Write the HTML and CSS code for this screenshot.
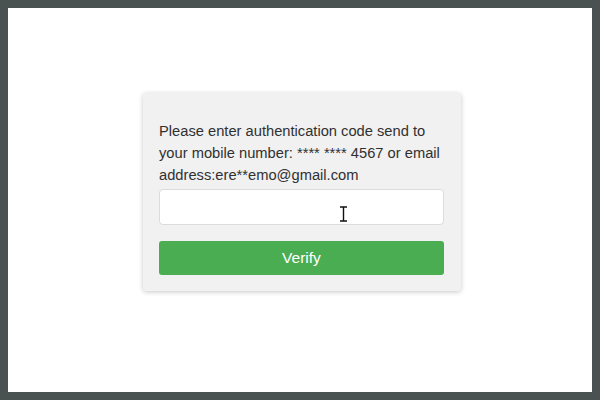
FILE: index.html
```html
<!DOCTYPE html>
<html>
<head>
<meta charset="utf-8">
<link rel="stylesheet" href="styles.css">
</head>
<body>
<div class="frame">
  <div class="card">
    <p class="msg">Please enter authentication code send to your mobile number: **** **** 4567 or email address:ere**emo@gmail.com</p>
    <div class="field">
      <input class="code" type="text">
      <svg class="ibeam" width="9" height="16" viewBox="0 0 9 16"><path d="M1 1h7M1 15h7M4.5 1v14" stroke="#111" stroke-width="1.4" fill="none"/></svg>
    </div>
    <button class="verify">Verify</button>
  </div>
</div>
</body>
</html>
```
FILE: styles.css
```css
* { box-sizing: border-box; }
html, body { margin: 0; padding: 0; }
body {
  width: 600px;
  height: 400px;
  background: #4a5151;
  font-family: "Liberation Sans", Arial, sans-serif;
}
.frame {
  position: relative;
  margin: 8px;
  width: 584px;
  height: 384px;
  background: #ffffff;
  overflow: hidden;
}
.card {
  position: absolute;
  left: 135px;
  top: 85px;
  width: 318px;
  height: 198px;
  background: #f1f1f1;
  border-radius: 3px;
  box-shadow: 0 1px 5px rgba(0,0,0,0.22);
  padding: 27px 15px 16px 16px;
  display: flex;
  flex-direction: column;
}
.msg {
  margin: 0;
  font-size: 14.7px;
  line-height: 22px;
  color: #303030;
}
.field {
  position: relative;
  margin-top: 3px;
}
.code {
  display: block;
  width: 285px;
  height: 36px;
  border: 1px solid #dcdcdc;
  border-radius: 4px;
  background: #ffffff;
  outline: none;
}
.ibeam {
  position: absolute;
  left: 180px;
  top: 17px;
}
.verify {
  margin-top: 16px;
  width: 285px;
  height: 35px;
  border: none;
  border-radius: 3px;
  background: #4bad52;
  color: #ffffff;
  font-family: "Liberation Sans", Arial, sans-serif;
  font-size: 15.5px;
}
```
